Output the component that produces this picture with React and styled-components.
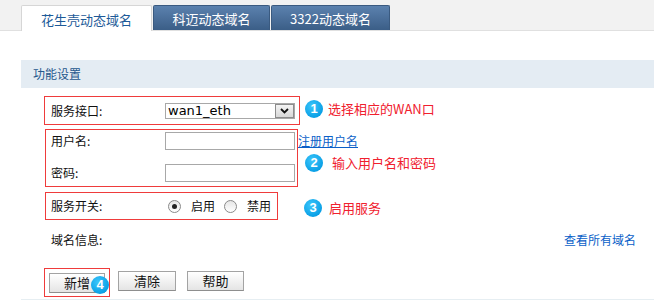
import React from "react";
import styled, { createGlobalStyle } from "styled-components";

const GlobalStyle = createGlobalStyle`
  html, body { margin: 0; padding: 0; background: #fff; }
  body {
    font-family: "Noto Sans CJK SC", "Noto Sans", sans-serif;
    font-size: 12px;
    color: #111;
  }
`;

const Page = styled.div`
  width: 654px;
  height: 300px;
  overflow: hidden;
`;

const TabBar = styled.div`
  height: 31px;
  box-sizing: border-box;
  background: #f2f2f2;
  border-bottom: 1px solid #e0e0e0;
  display: flex;
  align-items: flex-end;
  gap: 1px;
  padding-left: 21px;
`;

const Tab = styled.div`
  box-sizing: border-box;
  width: ${(p) => p.$w}px;
  height: ${(p) => (p.$active ? 26 : 25)}px;
  margin-bottom: ${(p) => (p.$active ? -1 : 0)}px;
  padding-top: 2px;
  display: flex;
  align-items: center;
  justify-content: center;
  font-size: 13px;
  line-height: 18px;
  border-radius: 2px 2px 0 0;
  ${(p) =>
    p.$active
      ? `background:#fff;color:#1d5a98;border:1px solid #d6d6d6;border-bottom:none;`
      : `background:linear-gradient(#5b81ae,#3b5e87);color:#fff;border:1px solid #3a5a80;border-bottom:none;`}
`;

const SectionHeader = styled.div`
  margin: 29px 0 0 21px;
  height: 28px;
  line-height: 28px;
  background: #e4ecf3;
  padding-left: 12px;
  color: #24578c;
  font-size: 12px;
`;

const FormArea = styled.div`
  padding: 8px 18px 0 44px;
`;

const Group = styled.div`
  display: flex;
  align-items: flex-start;
  margin-top: ${(p) => p.$mt || 0}px;
`;

const RedBox = styled.div`
  box-sizing: border-box;
  border: 1px solid #ef3b3b;
  width: ${(p) => p.$w}px;
  height: ${(p) => p.$h}px;
  margin-left: ${(p) => p.$ml || 0}px;
  padding: ${(p) => p.$pad || "0 0 0 6px"};
  display: flex;
  flex-direction: ${(p) => (p.$col ? "column" : "row")};
  align-items: ${(p) => (p.$col ? "stretch" : "center")};
  gap: ${(p) => p.$gap || 0}px;
  position: relative;
`;

const Field = styled.div`
  display: flex;
  align-items: center;
  height: 18px;
`;

const Label = styled.span`
  width: ${(p) => p.$w || 114}px;
  flex: none;
  font-size: 12px;
  line-height: 18px;
  color: #111;
`;

const Select = styled.div`
  box-sizing: border-box;
  width: 130px;
  height: 16px;
  border: 1px solid #a8a8a8;
  display: flex;
  align-items: stretch;
  background: #fff;
`;

const SelectText = styled.span`
  flex: 1;
  padding-left: 2px;
  font-family: "DejaVu Sans", Verdana, sans-serif;
  font-size: 13px;
  line-height: 14px;
  color: #000;
`;

const SelectButton = styled.span`
  box-sizing: border-box;
  width: 19px;
  border: 1px solid #8c8c8c;
  background: linear-gradient(#f4f4f4, #d8d8d8);
  display: flex;
  align-items: center;
  justify-content: center;
`;

const TextInput = styled.div`
  box-sizing: border-box;
  width: 130px;
  height: 18px;
  border: 1px solid #a8a8a8;
  background: #fff;
`;

const Side = styled.div`
  display: flex;
  flex-direction: column;
  align-items: flex-start;
`;

const Link = styled.a`
  color: #0a5fc8;
  font-size: 12px;
  line-height: 18px;
  text-decoration: ${(p) => (p.$underline ? "underline" : "none")};
  margin-top: ${(p) => p.$mt || 0}px;
  cursor: pointer;
`;

const Annotation = styled.div`
  display: flex;
  align-items: center;
  gap: ${(p) => p.$gap || 5}px;
  margin: ${(p) => p.$mt || 0}px 0 0 ${(p) => p.$ml || 0}px;
`;

const Badge = styled.span`
  width: 18px;
  height: 18px;
  border-radius: 50%;
  background: radial-gradient(circle at 40% 35%, #3cc6fb, #0aa0e6 70%);
  color: #fff;
  font-family: "Liberation Sans", Arial, sans-serif;
  font-weight: bold;
  font-size: 13px;
  line-height: 18px;
  text-align: center;
  flex: none;
`;

const OverlayBadge = styled(Badge)`
  position: absolute;
  left: 46px;
  top: 7px;
`;

const Note = styled.span`
  color: #f0202e;
  font-size: 13px;
  line-height: 18px;
  white-space: nowrap;
`;

const RadioGroup = styled.div`
  display: flex;
  align-items: center;
  margin-left: 3px;
`;

const Radio = styled.span`
  box-sizing: border-box;
  width: 13px;
  height: 13px;
  border-radius: 50%;
  border: 1px solid #8a8a8a;
  background: linear-gradient(#e6e6e6, #fff);
  display: flex;
  align-items: center;
  justify-content: center;
  margin-left: ${(p) => p.$ml || 0}px;
  &::after {
    content: "";
    width: 5px;
    height: 5px;
    border-radius: 50%;
    background: ${(p) => (p.$checked ? "#222" : "transparent")};
  }
`;

const RadioText = styled.span`
  margin-left: 10px;
  font-size: 12px;
  line-height: 18px;
`;

const InfoRow = styled.div`
  margin-top: 10px;
  height: 20px;
  padding-left: 7px;
  display: flex;
  align-items: center;
  justify-content: space-between;
`;

const ButtonRow = styled.div`
  margin-top: 18px;
  display: flex;
  align-items: flex-start;
`;

const Button = styled.button`
  box-sizing: border-box;
  width: ${(p) => p.$w}px;
  height: 20px;
  margin: ${(p) => p.$mt || 0}px 0 0 ${(p) => p.$ml || 0}px;
  padding: 0;
  border: 1px solid #a3a3a3;
  border-bottom-color: #8e8e8e;
  background: linear-gradient(#ffffff, #e4e4e4);
  font-family: "Noto Sans CJK SC", sans-serif;
  font-size: 13px;
  line-height: 18px;
  color: #111;
`;

const BottomLine = styled.div`
  margin: 2px 0 0 21px;
  height: 2px;
  background: #e6eef2;
`;

function Chevron() {
  return (
    <svg width="9" height="6" viewBox="0 0 9 6">
      <path d="M1 1 L4.5 4.5 L8 1" fill="none" stroke="#111" strokeWidth="1.8" />
    </svg>
  );
}

export default function App() {
  return (
    <Page>
      <GlobalStyle />
      <TabBar>
        <Tab $w={131} $active>花生壳动态域名</Tab>
        <Tab $w={117}>科迈动态域名</Tab>
        <Tab $w={119}>3322动态域名</Tab>
      </TabBar>

      <SectionHeader>功能设置</SectionHeader>

      <FormArea>
        <Group>
          <RedBox $w={256} $h={29}>
            <Label>服务接口:</Label>
            <Select>
              <SelectText>wan1_eth</SelectText>
              <SelectButton>
                <Chevron />
              </SelectButton>
            </Select>
          </RedBox>
          <Annotation $ml={5} $mt={4} $gap={5}>
            <Badge>1</Badge>
            <Note>选择相应的WAN口</Note>
          </Annotation>
        </Group>

        <Group $mt={4}>
          <RedBox $w={253} $h={58} $ml={1} $col $gap={14} $pad="2px 0 0 5px">
            <Field>
              <Label>用户名:</Label>
              <TextInput />
            </Field>
            <Field>
              <Label>密码:</Label>
              <TextInput />
            </Field>
          </RedBox>
          <Side>
            <Link $underline $mt={3}>注册用户名</Link>
            <Annotation $ml={7} $mt={4} $gap={9}>
              <Badge>2</Badge>
              <Note>输入用户名和密码</Note>
            </Annotation>
          </Side>
        </Group>

        <Group $mt={5}>
          <RedBox $w={233} $h={28} $ml={1} $pad="0 0 0 5px">
            <Label $w={114}>服务开关:</Label>
            <RadioGroup>
              <Radio $checked />
              <RadioText>启用</RadioText>
              <Radio $ml={9} />
              <RadioText>禁用</RadioText>
            </RadioGroup>
          </RedBox>
          <Annotation $ml={26} $mt={7} $gap={7}>
            <Badge>3</Badge>
            <Note>启用服务</Note>
          </Annotation>
        </Group>

        <InfoRow>
          <Label>域名信息:</Label>
          <Link>查看所有域名</Link>
        </InfoRow>

        <ButtonRow>
          <RedBox $w={66} $h={29} $pad="0 0 0 4px">
            <Button $w={56}>新增</Button>
            <OverlayBadge>4</OverlayBadge>
          </RedBox>
          <Button $w={58} $ml={8} $mt={3}>清除</Button>
          <Button $w={57} $ml={11} $mt={3}>帮助</Button>
        </ButtonRow>
      </FormArea>
      <BottomLine />
    </Page>
  );
}
